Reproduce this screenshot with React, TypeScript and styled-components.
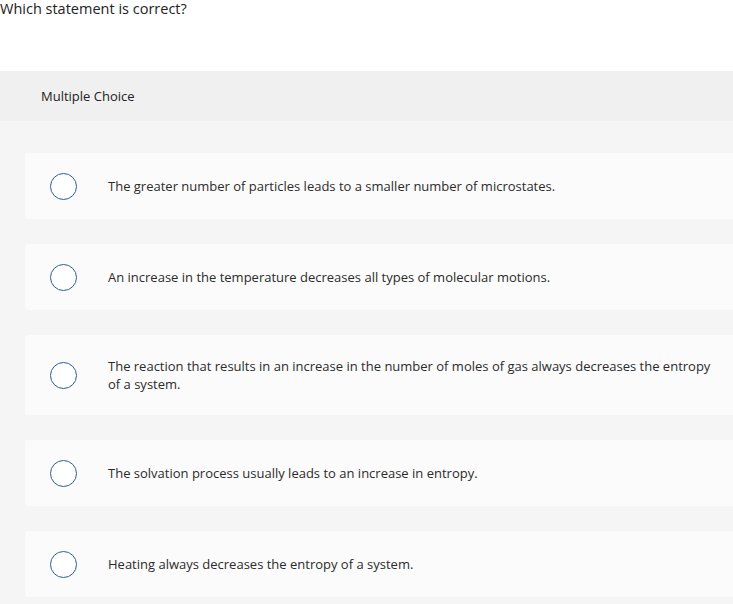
import styled, { createGlobalStyle } from 'styled-components';

const GlobalStyle = createGlobalStyle`
  html, body {
    margin: 0;
    padding: 0;
    background: #f5f5f5;
    overflow-x: hidden;
  }
  body {
    font-family: "Open Sans", "Liberation Sans", Arial, sans-serif;
    color: #333;
  }
`;

const Page = styled.div`
  width: 760px;
  min-height: 604px;
  background: #f5f5f5;
`;

const Prompt = styled.div`
  background: #fff;
  height: 71px;
  font-size: 14.5px;
  line-height: 18px;
  color: #222;
`;

const TypeBar = styled.div`
  background: #f0f0f0;
  height: 50px;
  display: flex;
  align-items: center;
  padding-left: 41px;
  font-size: 13px;
  color: #222;
`;

const OptionList = styled.div`
  display: flex;
  flex-direction: column;
  gap: 25px;
  padding: 32px 0 6px 25px;
`;

const Option = styled.label`
  display: flex;
  align-items: center;
  min-height: 66px;
  box-sizing: border-box;
  padding: 0 0 0 25px;
  background: #fbfbfb;
  border-radius: 3px;
  cursor: pointer;
`;

const Radio = styled.span`
  flex: 0 0 auto;
  width: 27px;
  height: 27px;
  box-sizing: border-box;
  border: 1.5px solid #2b5e97;
  border-radius: 50%;
  background: #fff;
  margin-right: 31px;
`;

const OptionText = styled.span`
  width: 612px;
  padding: 22px 0;
  font-size: 13px;
  line-height: 18px;
  color: #2b2b2b;
`;

const options = [
  'The greater number of particles leads to a smaller number of microstates.',
  'An increase in the temperature decreases all types of molecular motions.',
  'The reaction that results in an increase in the number of moles of gas always decreases the entropy of a system.',
  'The solvation process usually leads to an increase in entropy.',
  'Heating always decreases the entropy of a system.',
];

export default function App() {
  return (
    <Page>
      <GlobalStyle />
      <Prompt>Which statement is correct?</Prompt>
      <TypeBar>Multiple Choice</TypeBar>
      <OptionList>
        {options.map((text) => (
          <Option key={text}>
            <Radio />
            <OptionText>{text}</OptionText>
          </Option>
        ))}
      </OptionList>
    </Page>
  );
}
